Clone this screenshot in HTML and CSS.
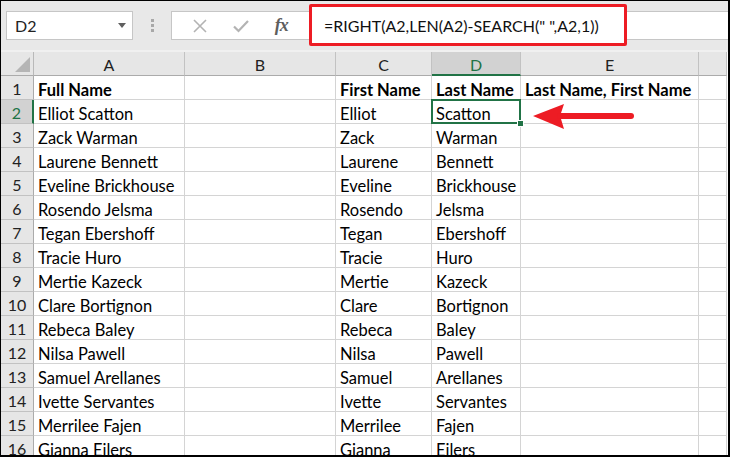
FILE: index.html
```html
<!DOCTYPE html>
<html>
<head>
<meta charset="utf-8">
<link rel="stylesheet" href="styles.css">
</head>
<body>
<div class="frame">
  <div class="toolbar">
    <div class="namebox"><span class="nb-text">D2</span><span class="nb-arrow"></span></div>
    <div class="dots"><i></i><i></i><i></i></div>
    <div class="fxbox">
      <svg class="ico" width="16" height="16" viewBox="0 0 16 16"><path d="M2 2 L14 14 M14 2 L2 14" stroke="#b3b3b3" stroke-width="1.6" fill="none"/></svg>
      <svg class="ico" width="18" height="16" viewBox="0 0 18 16"><path d="M2 8.5 L6.5 13 L16 3" stroke="#b3b3b3" stroke-width="2.2" fill="none"/></svg>
      <span class="fx">fx</span>
    </div>
    <div class="formula"><span class="ftext">=RIGHT(A2,LEN(A2)-SEARCH(" ",A2,1))</span></div>
    <div class="redbox"></div>
  </div>
  <div class="gap"></div>
  <div class="sheet">
    <div class="corner"><span class="tri"></span></div>
    <div class="ch">A</div><div class="ch">B</div><div class="ch">C</div><div class="ch sel-col">D</div><div class="ch">E</div><div class="ch"></div>

    <div class="rh">1</div><div class="c b">Full Name</div><div class="c"></div><div class="c b">First Name</div><div class="c b">Last Name</div><div class="c b">Last Name, First Name</div><div class="c"></div>
    <div class="rh sel-row">2</div><div class="c">Elliot Scatton</div><div class="c"></div><div class="c">Elliot</div><div class="c active">Scatton<span class="selbox"><span class="handle"></span></span></div><div class="c"></div><div class="c"></div>
    <div class="rh">3</div><div class="c">Zack Warman</div><div class="c"></div><div class="c">Zack</div><div class="c">Warman</div><div class="c"></div><div class="c"></div>
    <div class="rh">4</div><div class="c">Laurene Bennett</div><div class="c"></div><div class="c">Laurene</div><div class="c">Bennett</div><div class="c"></div><div class="c"></div>
    <div class="rh">5</div><div class="c">Eveline Brickhouse</div><div class="c"></div><div class="c">Eveline</div><div class="c">Brickhouse</div><div class="c"></div><div class="c"></div>
    <div class="rh">6</div><div class="c">Rosendo Jelsma</div><div class="c"></div><div class="c">Rosendo</div><div class="c">Jelsma</div><div class="c"></div><div class="c"></div>
    <div class="rh">7</div><div class="c">Tegan Ebershoff</div><div class="c"></div><div class="c">Tegan</div><div class="c">Ebershoff</div><div class="c"></div><div class="c"></div>
    <div class="rh">8</div><div class="c">Tracie Huro</div><div class="c"></div><div class="c">Tracie</div><div class="c">Huro</div><div class="c"></div><div class="c"></div>
    <div class="rh">9</div><div class="c">Mertie Kazeck</div><div class="c"></div><div class="c">Mertie</div><div class="c">Kazeck</div><div class="c"></div><div class="c"></div>
    <div class="rh">10</div><div class="c">Clare Bortignon</div><div class="c"></div><div class="c">Clare</div><div class="c">Bortignon</div><div class="c"></div><div class="c"></div>
    <div class="rh">11</div><div class="c">Rebeca Baley</div><div class="c"></div><div class="c">Rebeca</div><div class="c">Baley</div><div class="c"></div><div class="c"></div>
    <div class="rh">12</div><div class="c">Nilsa Pawell</div><div class="c"></div><div class="c">Nilsa</div><div class="c">Pawell</div><div class="c"></div><div class="c"></div>
    <div class="rh">13</div><div class="c">Samuel Arellanes</div><div class="c"></div><div class="c">Samuel</div><div class="c">Arellanes</div><div class="c"></div><div class="c"></div>
    <div class="rh">14</div><div class="c">Ivette Servantes</div><div class="c"></div><div class="c">Ivette</div><div class="c">Servantes</div><div class="c"></div><div class="c"></div>
    <div class="rh">15</div><div class="c">Merrilee Fajen</div><div class="c"></div><div class="c">Merrilee</div><div class="c">Fajen</div><div class="c"></div><div class="c"></div>
    <div class="rh">16</div><div class="c">Gianna Eilers</div><div class="c"></div><div class="c">Gianna</div><div class="c">Eilers</div><div class="c"></div><div class="c"></div>

    <svg class="arrow" width="110" height="32" viewBox="0 0 110 32">
      <path d="M5 16 L36 4 L33 13 L33 19 L36 29 Z" fill="#ed1c24"/>
      <line x1="32" y1="16" x2="103" y2="16" stroke="#ed1c24" stroke-width="6" stroke-linecap="round"/>
    </svg>
  </div>
</div>
</body>
</html>
```

FILE: styles.css
```css
* { box-sizing: border-box; }
html, body { margin: 0; padding: 0; background: #fff; }
body { font-family: Lato, "Open Sans", sans-serif; color: #000; }

.frame {
  width: 730px;
  height: 457px;
  border-top: 1px solid #000;
  border-left: 1px solid #000;
  border-right: 2px solid #000;
  border-bottom: 2px solid #000;
  overflow: hidden;
  background: #fff;
}

.toolbar {
  position: relative;
  height: 49px;
  background: #e8e8e8;
  display: flex;
  align-items: flex-start;
  padding: 10px 0 0 5px;
}

.namebox {
  width: 127px;
  height: 29px;
  background: #fff;
  border: 1px solid #c6c6c6;
  display: flex;
  align-items: center;
  justify-content: space-between;
  padding: 0 6px 0 8px;
}
.nb-text { font-size: 16px; color: #222; }
.nb-arrow {
  width: 0; height: 0;
  border-left: 4.5px solid transparent;
  border-right: 4.5px solid transparent;
  border-top: 5px solid #5f5f5f;
}

.dots {
  width: 38px;
  height: 29px;
  display: flex;
  flex-direction: column;
  align-items: center;
  justify-content: center;
  gap: 2px;
}
.dots i { display: block; width: 3px; height: 3px; background: #a8a8a8; }

.fxbox {
  width: 135px;
  height: 29px;
  background: #fff;
  border: 1px solid #c6c6c6;
  border-right: none;
  display: flex;
  align-items: center;
  justify-content: space-around;
  padding: 0 6px 0 8px;
}
.ico { display: block; }
.fx {
  font-family: "Liberation Serif", serif;
  font-style: italic;
  font-weight: bold;
  font-size: 18px;
  color: #5e5e5e;
  letter-spacing: -1px;
}

.formula {
  flex: 1;
  height: 29px;
  background: #fff;
  border-top: 1px solid #c6c6c6;
  border-bottom: 1px solid #c6c6c6;
  display: flex;
  align-items: center;
  padding-left: 18px;
}
.ftext {
  position: relative;
  z-index: 2;
  font-size: 16px;
  color: #111;
  white-space: pre;
}
.redbox {
  position: absolute;
  z-index: 1;
  left: 308px;
  top: 3px;
  width: 318px;
  height: 42px;
  border: 3px solid #ed1c24;
  border-radius: 2px;
  background: #fff;
}

.gap { height: 2px; background: #f0f0f0; }

.sheet {
  position: relative;
  display: grid;
  grid-template-columns: 33px 151px 151px 96px 89px 178px 28px;
  grid-auto-rows: 24px;
}

.corner {
  position: relative;
  background: #e6e6e6;
  border-right: 1px solid #b9b9b9;
  border-bottom: 1px solid #ababab;
}
.tri {
  position: absolute;
  right: 3px;
  bottom: 3px;
  width: 0; height: 0;
  border-left: 15px solid transparent;
  border-bottom: 15px solid #b5b5b5;
}

.ch {
  background: #e6e6e6;
  border-right: 1px solid #c2c2c2;
  border-bottom: 1px solid #ababab;
  text-align: center;
  font-size: 16px;
  line-height: 23px;
  padding-top: 1px;
  color: #222;
}
.ch.sel-col {
  background: #d2d2d2;
  color: #217346;
  border-bottom: 2px solid #217346;
}

.rh {
  background: #e6e6e6;
  border-right: 1px solid #ababab;
  border-bottom: 1px solid #c2c2c2;
  text-align: center;
  font-size: 16px;
  line-height: 24px;
  padding-top: 1px;
  color: #222;
}
.rh.sel-row {
  background: #d2d2d2;
  color: #217346;
  border-right: 2px solid #217346;
}

.c {
  position: relative;
  border-right: 1px solid #d4d4d4;
  border-bottom: 1px solid #d4d4d4;
  font-size: 16.5px;
  line-height: 24px;
  padding-left: 4px;
  padding-top: 2px;
  white-space: nowrap;
}
.c.b { font-weight: bold; }
.c.active { z-index: 3; }

.selbox {
  position: absolute;
  left: -1px;
  top: -1px;
  right: -1px;
  bottom: -1px;
  border: 2px solid #217346;
}
.handle {
  position: absolute;
  right: -5px;
  bottom: -5px;
  width: 7px;
  height: 7px;
  background: #217346;
  border: 1px solid #fff;
}

.arrow {
  position: absolute;
  z-index: 4;
  left: 527px;
  top: 48px;
}
```
